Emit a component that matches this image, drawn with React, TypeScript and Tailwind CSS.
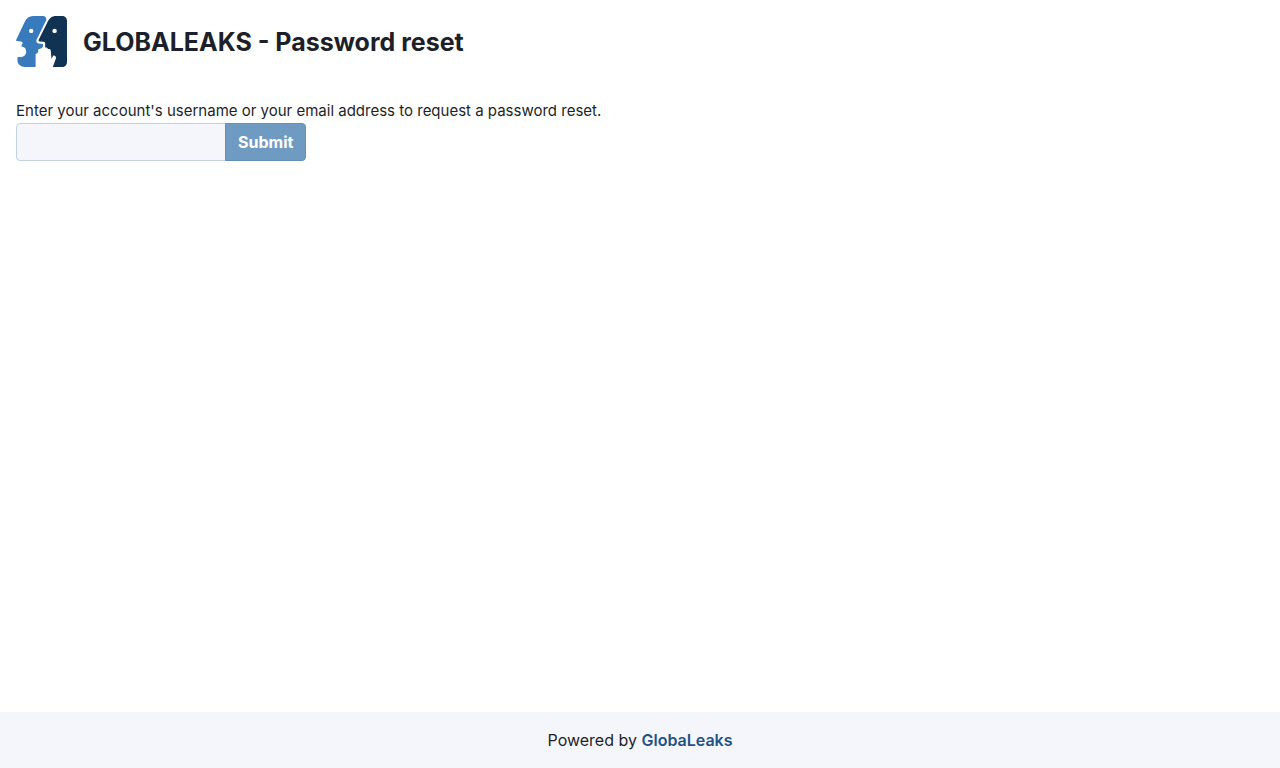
import { useState } from "react";

function Logo() {
  return (
    <svg viewBox="0 0 51 51" className="size-[51px] shrink-0" role="img" aria-label="GlobaLeaks">
      <path
        fill="#377bbc"
        d="M17 0H27C29.3 0 30.5 1.8 30.3 4L20.6 23.8C20 25.6 20.8 27.2 22.6 27.4L27 27.9V30.4L25.6 32.2L22.4 33.2L22 36.4L19.6 38.2V51H9C4.5 51 1.5 48 1.5 44.5V41.8C1.5 41.3 2 41 2.6 41.1C7 41.8 10.2 39.5 10.2 35.5C10.2 33 8.7 30.8 5.2 30.3L6.5 27.5C6.8 26.5 6.2 25.7 5.2 25.5L.8 25C.1 24.9-.1 24.4.2 23.8L8.5 6.2C10.5 2 13.2 0 17 0Z"
      />
      <path
        fill="#103253"
        d="M40 0H46C49 0 51 2 51 5V46C51 49 49 51 46 51H36.8L39.9 42.5C40.4 40.8 38.8 39 37.2 39.8L35.5 42.7L34.8 34.8C34.6 33.2 33.2 32.6 32 33.2C31.6 31.8 30.5 31.2 29.2 31.7V27.4C29.2 26.4 28.6 25.9 27.6 25.8L23.7 25.4C22.7 25.3 22.4 24.6 22.7 23.8L31.4 6.2C33.4 2 36 0 40 0Z"
      />
      <circle cx="15.2" cy="14.9" r="2.2" fill="white" />
      <circle cx="38.6" cy="14.9" r="2.2" fill="white" />
    </svg>
  );
}

export default function App() {
  const [username, setUsername] = useState("");

  return (
    <div className="flex min-h-screen flex-col bg-white font-[Metropolis,Inter,sans-serif] text-base text-[#1d1f2a]">
      <header className="flex items-center gap-4 p-4">
        <Logo />
        <h1 className="text-[25px] leading-8 font-bold">GLOBALEAKS - Password reset</h1>
      </header>
      <main className="flex-1 px-4 pt-4">
        <form onSubmit={(event) => event.preventDefault()}>
          <label htmlFor="username" className="block text-[15px] leading-6">
            Enter your account's username or your email address to request a password reset.
          </label>
          <div className="flex">
            <input
              id="username"
              type="text"
              value={username}
              onChange={(event) => setUsername(event.target.value)}
              className="h-[38px] w-[210px] rounded-l border border-[#c3d1e2] bg-[#f5f6fb] px-3 outline-none"
            />
            <button
              type="submit"
              disabled={!username}
              className="-ml-px h-[38px] rounded-r border border-[#6290b9] bg-[#6f9bc2] px-3 font-bold text-white"
            >
              Submit
            </button>
          </div>
        </form>
      </main>
      <footer className="bg-[#f5f6fb] p-4 text-center">
        Powered by{" "}
        <a href="https://www.globaleaks.org" className="font-semibold text-[#1f5287]">
          GlobaLeaks
        </a>
      </footer>
    </div>
  );
}
